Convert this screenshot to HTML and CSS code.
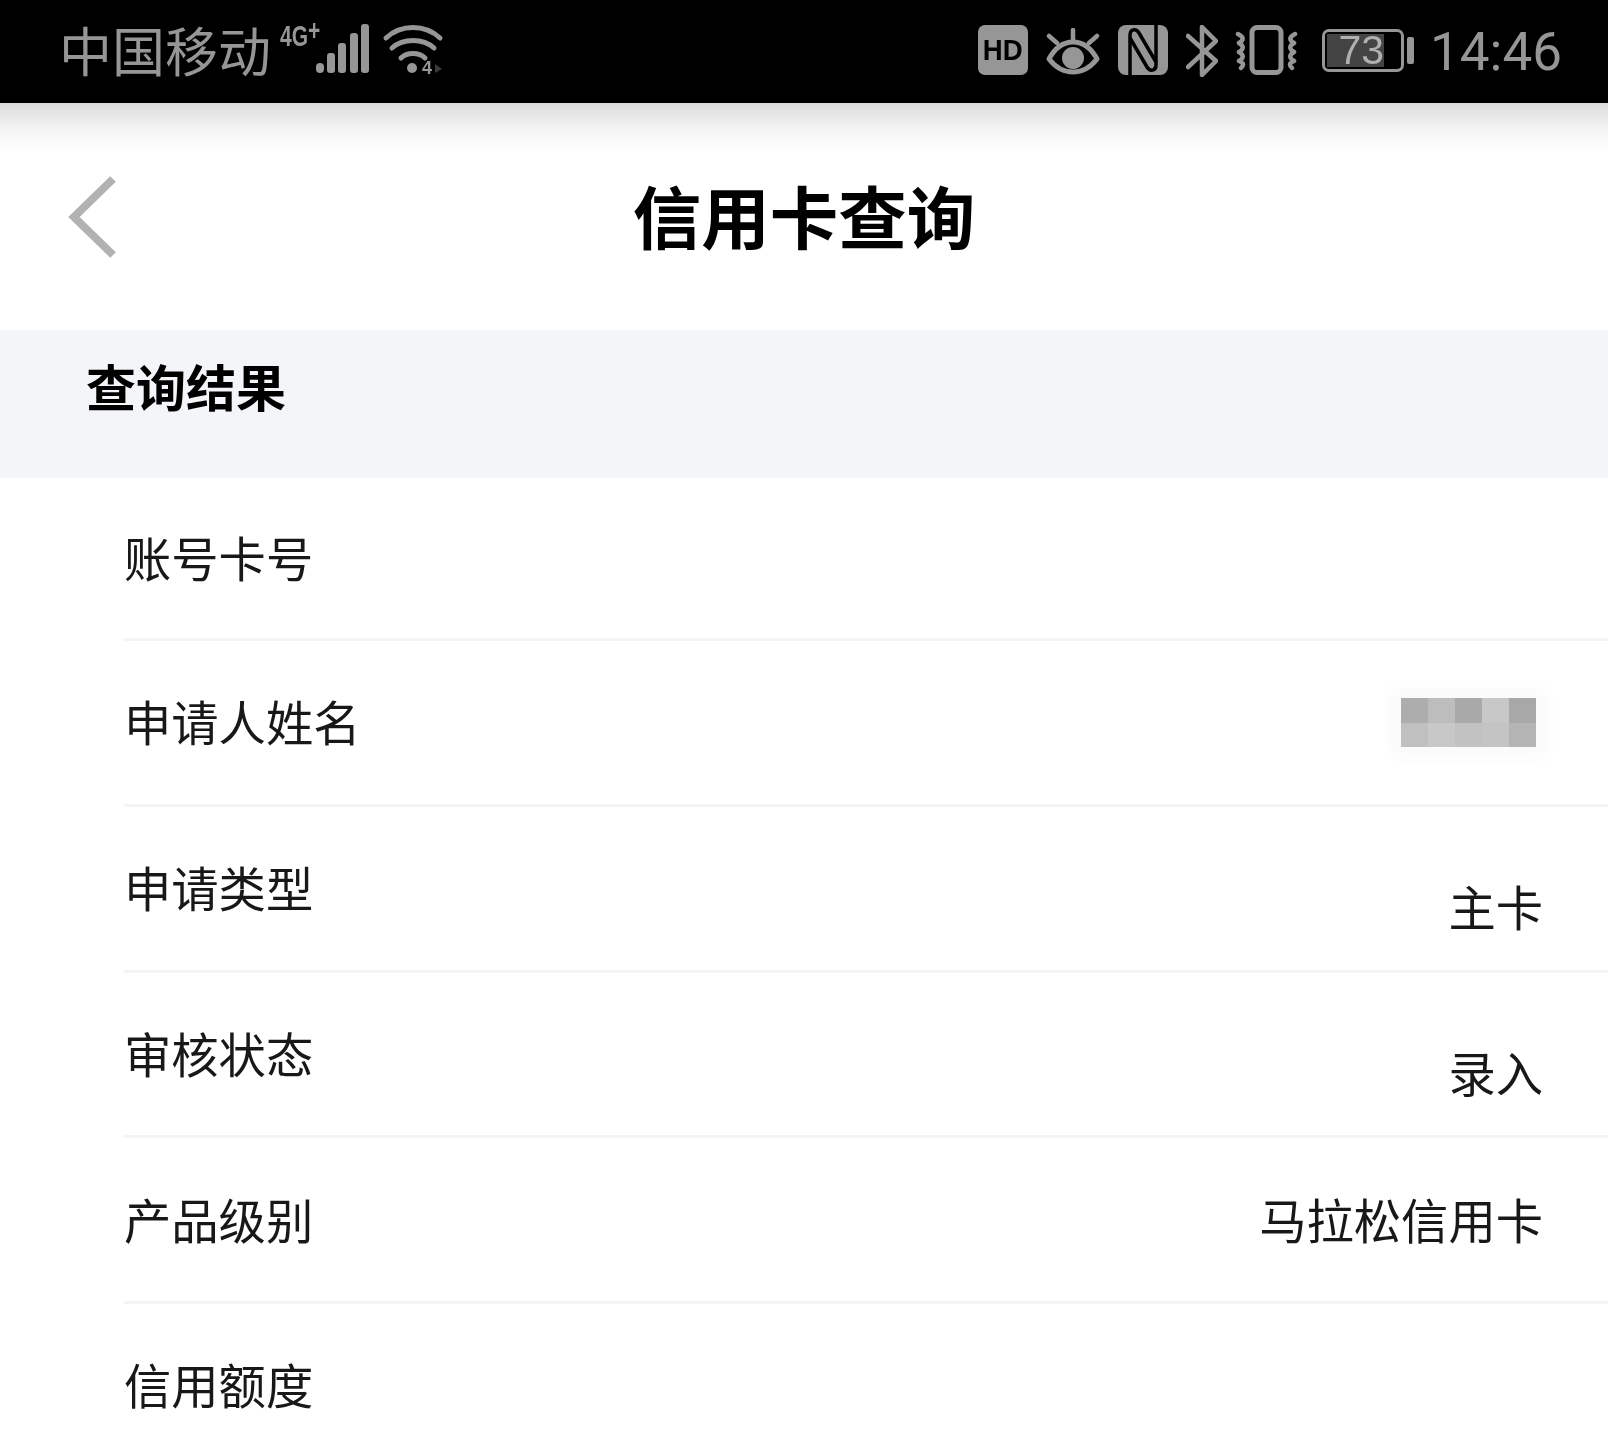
FILE: index.html
```html
<!DOCTYPE html>
<html lang="zh-CN">
<head>
    <meta charset="UTF-8">
    <title>信用卡查询</title>
    <link rel="stylesheet" href="styles.css">
</head>
<body>
    <div class="status-bar">
        <div class="status-left">
            <span class="carrier">中国移动</span>
            <span class="net">4G<sup class="plus">+</sup></span>
            <svg class="signal" width="53" height="49" viewBox="0 0 53 49" fill="#969696">
                <rect x="0" y="39" width="8" height="10" rx="4"/>
                <rect x="11" y="29" width="8" height="20" rx="3"/>
                <rect x="22" y="19" width="8" height="30" rx="3"/>
                <rect x="34" y="9" width="8" height="40" rx="3"/>
                <rect x="45" y="0" width="8" height="49" rx="3"/>
            </svg>
            <svg class="wifi" width="60" height="48" viewBox="0 0 60 48" fill="none" stroke="#969696" stroke-width="5" stroke-linecap="round">
                <path d="M3 13C18 -1 42 -1 57 13"/>
                <path d="M9 23C20 13 40 13 51 23"/>
                <path d="M18 33C24 27 36 27 42 33"/>
                <circle cx="29" cy="43" r="5" fill="#969696" stroke="none"/>
                <text class="wifi-tag" x="39" y="49">4</text>
                <path d="M52 39L59 44L52 48Z" fill="#3a3a3a" stroke="none"/>
            </svg>
        </div>
        <div class="status-right">
            <span class="hd"><span class="hd-text">HD</span></span>
            <svg class="eye" width="54" height="47" viewBox="0 0 54 47" fill="none" stroke="#969696" stroke-width="5" stroke-linecap="round" stroke-linejoin="round">
                <path d="M3 31C10 18 18 14 27 14C36 14 44 18 51 31C44 40 36 44 27 44C18 44 10 40 3 31Z"/>
                <circle cx="27" cy="30" r="11" fill="#969696" stroke="none"/>
                <path d="M27 2V11M3 8L11 15M51 8L43 15" stroke-width="4.500"/>
            </svg>
            <svg class="nfc" width="50" height="50" viewBox="0 0 50 50">
                <rect width="50" height="50" rx="8" fill="#969696"/>
                <path d="M12 50V10C12 4 18 3 21 8L38 37" fill="none" stroke="#000" stroke-width="3.500"/>
                <path d="M38 0V40C38 46 32 47 29 42L12 13" fill="none" stroke="#000" stroke-width="3.500"/>
            </svg>
            <svg class="bluetooth" width="32" height="52" viewBox="0 0 32 52" fill="none" stroke="#969696" stroke-width="4.500" stroke-linecap="round" stroke-linejoin="round">
                <path d="M2 11L30 36L16 50V2L30 16L2 42"/>
            </svg>
            <svg class="vibrate" width="63" height="50" viewBox="0 0 63 50" fill="none" stroke="#969696" stroke-width="4.500" stroke-linecap="round" stroke-linejoin="round">
                <rect x="17" y="2.500" width="29" height="45" rx="5" stroke-width="5"/>
                <path d="M3 9C9 12 9 15 4 18C9 21 9 24 4 27C9 30 9 33 4 36C9 38 9 40 6 43"/>
                <path d="M60 9C54 12 54 15 59 18C54 21 54 24 59 27C54 30 54 33 59 36C54 38 54 40 57 43"/>
            </svg>
            <div class="battery">
                <div class="battery-box">
                    <span class="battery-level">73</span>
                </div>
                <span class="battery-nub"></span>
            </div>
            <span class="clock">14:46</span>
        </div>
    </div>

    <div class="nav">
        <svg class="back" width="50" height="84" viewBox="0 0 50 84" fill="none" stroke="#b2b2b2" stroke-width="8">
            <path d="M46 4L7 42L46 80"/>
        </svg>
        <h1 class="title">信用卡查询</h1>
    </div>

    <div class="section-head">查询结果</div>

    <div class="result-list">
        <div class="row row-first">
            <span class="label">账号卡号</span>
        </div>
        <div class="row">
            <span class="label">申请人姓名</span>
            <div class="mosaic">
                <i></i><i></i><i></i><i></i><i></i>
                <i></i><i></i><i></i><i></i><i></i>
            </div>
        </div>
        <div class="row">
            <span class="label">申请类型</span>
            <span class="value value-low">主卡</span>
        </div>
        <div class="row">
            <span class="label">审核状态</span>
            <span class="value value-low">录入</span>
        </div>
        <div class="row">
            <span class="label">产品级别</span>
            <span class="value">马拉松信用卡</span>
        </div>
        <div class="row">
            <span class="label">信用额度</span>
        </div>
    </div>
</body>
</html>
```

FILE: styles.css
```css
html, body {
    margin: 0;
    height: 1444px;
    overflow: hidden;
}
body {
    background-color: #ffffff;
    color: #111111;
    font-family: "Noto Sans CJK SC", "Noto Sans", sans-serif;
    filter: blur(0.6px); /* the source is a soft phone photo */
}

/* status bar */
.status-bar {
    height: 103px;
    box-sizing: border-box;
    background-color: #000000;
    color: #969696;
    display: flex;
    justify-content: space-between;
    align-items: center;
    padding: 0 46px 3px 59px;
}
.status-left, .status-right {
    display: flex;
    align-items: center;
}
.carrier {
    font-size: 53px;
    line-height: 60px;
    margin-bottom: 3px;
}
.net {
    align-self: flex-start;
    margin-left: 9px;
    margin-top: 2px;
    width: 36px;
    font-family: "Liberation Sans", sans-serif;
    font-size: 30px;
    font-weight: bold;
    line-height: 30px;
    white-space: nowrap;
    transform: scaleX(0.7);
    transform-origin: left;
}
.plus {
    font-size: 30px;
    line-height: 0;
    vertical-align: 6px;
}
.signal {
    margin-bottom: 3px;
}
.wifi {
    margin-left: 14px;
    margin-bottom: 2px;
    overflow: visible;
}
.wifi-tag {
    fill: #969696;
    stroke: none;
    font-family: "Liberation Sans", sans-serif;
    font-size: 18px;
    font-weight: bold;
}
.hd {
    width: 50px;
    height: 50px;
    background-color: #969696;
    border-radius: 7px;
    color: #000000;
    font-family: "Liberation Sans", sans-serif;
    font-size: 30px;
    font-weight: bold;
    line-height: 50px;
    text-align: center;
}
.hd-text {
    display: inline-block;
    transform: scaleX(0.92);
}
.eye {
    margin-left: 18px;
    margin-top: 2px;
}
.nfc {
    margin-left: 18px;
}
.bluetooth {
    margin-left: 18px;
    margin-top: 2px;
}
.vibrate {
    margin-left: 17px;
}
.battery {
    display: flex;
    align-items: center;
    margin-left: 24px;
}
.battery-box {
    width: 82px;
    height: 43px;
    box-sizing: border-box;
    border: 3px solid #969696;
    border-radius: 7px;
    padding: 2px;
    display: flex;
}
.battery-level {
    width: 57px;
    background-color: #444444;
    color: #b0b0b0;
    font-family: "Liberation Sans", sans-serif;
    font-size: 41px;
    line-height: 33px;
    text-align: right;
}
.battery-nub {
    width: 7px;
    height: 27px;
    margin-left: 3px;
    border-radius: 2px;
    background-color: #969696;
}
.clock {
    margin-left: 16px;
    margin-top: 3px;
    font-family: "Roboto", sans-serif;
    font-size: 53px;
    line-height: 60px;
}

/* nav */
.nav {
    height: 227px;
    box-sizing: border-box;
    padding-bottom: 4px;
    display: flex;
    align-items: center;
    position: relative;
    justify-content: center;
    background: linear-gradient(to bottom, #dddddd 0, #f5f5f5 28px, #ffffff 50px);
}
.back {
    position: absolute;
    left: 67px;
    top: 72px;
}
.title {
    margin: 0;
    font-size: 68.500px;
    font-weight: bold;
    line-height: 80px;
    color: #000000;
}

/* section */
.section-head {
    height: 148px;
    box-sizing: border-box;
    padding: 25px 0 0 86px;
    background-color: #f4f5f8;
    color: #000000;
    font-size: 50px;
    font-weight: bold;
    line-height: 60px;
}

/* rows */
.result-list {
    margin-left: 124px;
}
.row {
    height: 165.750px;
    box-sizing: border-box;
    border-bottom: 3px solid #f4f4f4;
    padding-right: 65px;
    padding-bottom: 2px;
    display: flex;
    justify-content: space-between;
    align-items: center;
    font-size: 47.300px;
    line-height: 60px;
}
.row-first {
    height: 163px;
}
.label, .value {
    color: #181818;
}
.value-low {
    margin-top: 38px;
}
.mosaic {
    width: 135px;
    margin-right: 7px;
    margin-top: 3px;
    display: grid;
    grid-template-columns: repeat(5, 27px);
    grid-auto-rows: 24.500px;
    box-shadow: 0 0 14px 12px #fbfbfb;
}
.mosaic i:nth-child(1) { background-color: #adadad; }
.mosaic i:nth-child(2) { background-color: #bdbdbd; }
.mosaic i:nth-child(3) { background-color: #a9a9a9; }
.mosaic i:nth-child(4) { background-color: #c8c8c8; }
.mosaic i:nth-child(5) { background-color: #a8a8a8; }
.mosaic i:nth-child(6) { background-color: #c0c0c0; }
.mosaic i:nth-child(7) { background-color: #c8c8c8; }
.mosaic i:nth-child(8) { background-color: #c2c2c2; }
.mosaic i:nth-child(9) { background-color: #c4c4c4; }
.mosaic i:nth-child(10) { background-color: #b4b4b4; }
```
